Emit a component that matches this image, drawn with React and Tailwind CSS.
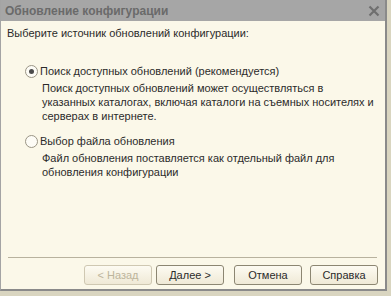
import React, { useState } from "react";

function Radio({ checked }) {
  return (
    <span className="w-[13px] h-[13px] rounded-full border border-[#9a9585] bg-[#fdfcf6] flex items-center justify-center shrink-0">
      {checked && <span className="w-[5px] h-[5px] rounded-full bg-[#4a4a4a]" />}
    </span>
  );
}

function Button({ children, disabled }) {
  return (
    <button
      type="button"
      disabled={disabled}
      className={
        "w-[68px] h-[20px] rounded-[3px] border text-[11px] leading-[18px] bg-gradient-to-b from-[#fdfbf2] to-[#efe9d6] " +
        (disabled
          ? "border-[#cfc8b2] text-[#bdb59c]"
          : "border-[#8c8672] text-[#2b2b2b]")
      }
    >
      {children}
    </button>
  );
}

export default function App() {
  const [source, setSource] = useState("search");

  return (
    <div className="w-[391px] h-[296px] bg-[#d9d5c0] overflow-hidden font-['Liberation_Sans',Arial,sans-serif]">
      <div className="w-[387px] h-[291px] flex flex-col border-l border-[#a4a4a4] border-r-[2px] border-r-[#8a8a8a] border-b-[2px] border-b-[#8a8a8a]">
        <div className="h-[21px] bg-[#a6a6a6] flex items-center justify-between pl-[4px] pr-[5px] shrink-0">
          <span className="text-[12px] font-bold text-[#6a6a6a]">Обновление конфигурации</span>
          <svg width="12" height="12" viewBox="0 0 12 12">
            <path d="M1.5 1.5L10.5 10.5M10.5 1.5L1.5 10.5" stroke="#6f6f6f" strokeWidth="2.2" />
          </svg>
        </div>

        <div className="flex-1 bg-[#fbf8e9] flex flex-col text-[11px] leading-[14px] text-[#2b2b2b] pl-[6px] pr-[7px]">
          <div className="mt-[5px]">Выберите источник обновлений конфигурации:</div>

          <label
            className="flex items-center gap-[2px] mt-[24px] ml-[18px]"
            onClick={() => setSource("search")}
          >
            <Radio checked={source === "search"} />
            <span>Поиск доступных обновлений (рекомендуется)</span>
          </label>
          <div className="mt-[3px] ml-[35px]">
            Поиск доступных обновлений может осуществляться в
            <br />
            указанных каталогах, включая каталоги на съемных носителях и
            <br />
            серверах в интернете.
          </div>

          <label
            className="flex items-center gap-[2px] mt-[11px] ml-[18px]"
            onClick={() => setSource("file")}
          >
            <Radio checked={source === "file"} />
            <span>Выбор файла обновления</span>
          </label>
          <div className="mt-[3px] ml-[35px]">
            Файл обновления поставляется как отдельный файл для
            <br />
            обновления конфигурации
          </div>

          <div className="mt-auto border-t border-[#b8b29e] mx-[1px]" />
          <div className="flex justify-end items-center pt-[7px] pb-[4px]">
            <div className="flex gap-[4px]">
              <Button disabled>&lt; Назад</Button>
              <Button>Далее &gt;</Button>
            </div>
            <div className="ml-[10px] flex gap-[8px]">
              <Button>Отмена</Button>
              <Button>Справка</Button>
            </div>
          </div>
        </div>
      </div>
    </div>
  );
}
